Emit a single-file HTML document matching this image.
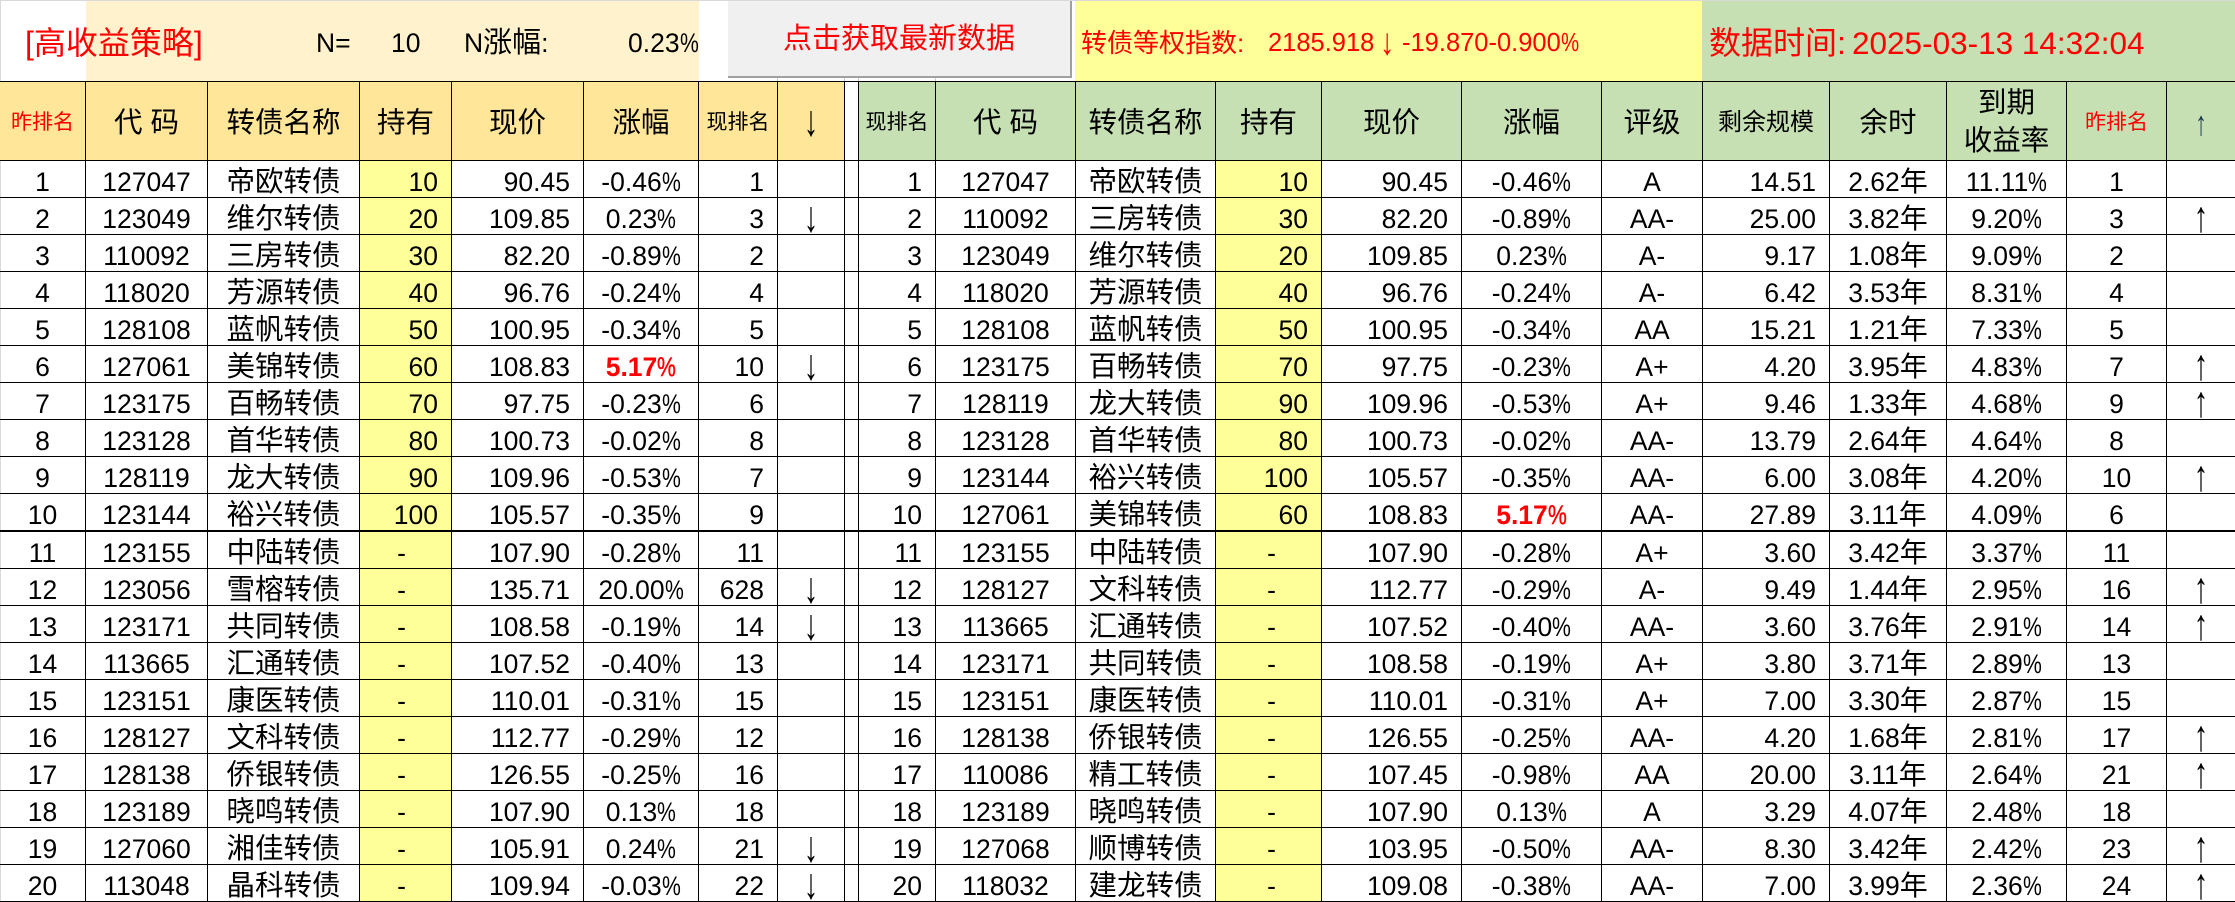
<!DOCTYPE html>
<html lang="zh">
<head>
<meta charset="utf-8">
<title>高收益策略</title>
<style>
*{box-sizing:border-box}
html,body{margin:0;padding:0;background:#fff;width:2235px;height:902px;overflow:hidden}
body{position:relative;font-family:"Liberation Sans","Noto Sans CJK SC",sans-serif;color:#000}
.a{position:absolute;white-space:nowrap}
.t{line-height:40px;height:40px}
table{position:absolute;left:0;top:81px;width:2235px;table-layout:fixed;border-collapse:separate;border-spacing:0}
td,th{border-right:1px solid #000;border-bottom:1px solid #000;padding:5px 0 0;height:37px;font-size:26.5px;line-height:30px;font-weight:normal;text-align:center;white-space:nowrap;overflow:hidden}
td:last-child,th:last-child{border-right:0}
tr.x td{height:38px;border-bottom-width:2px}
th{height:80px;border-top:1px solid #000;font-size:28.5px;padding:4px 0 0;line-height:38px}
th.two{padding:2px 0 0}
th.o{background:#ffe699}
th.g{background:#c6e0b4}
th.s{font-size:21px}
th.m{font-size:24px}
th.r{color:#f00}
th.w{background:#fff}
td:nth-child(3),td:nth-child(12){font-size:28.5px;padding-top:6px}
td:nth-child(4),td:nth-child(13){background:#ffff99;text-align:right;padding-right:13px}
td:nth-child(5),td:nth-child(7),td:nth-child(10),td:nth-child(14),td:nth-child(17){text-align:right;padding-right:13px}
td.d{text-align:center;padding-right:8px}
td:nth-child(13).d{padding-right:0;padding-left:6px}
i{font-style:normal;display:inline-block;width:19px;transform:scaleX(.8);transform-origin:0 50%;text-align:left;font-weight:normal}
i.h{-webkit-text-stroke:.5px #f00;color:#f00}
em{font-style:normal;font-size:28px}
b{color:#f00;font-weight:bold}
u{text-decoration:none;font-family:"Liberation Sans",sans-serif;font-size:29px;display:inline-block;line-height:30px;transform:translateY(-1px) scaleY(1.5)}
th u{font-size:29px}
th.ua u{font-size:23px;color:#1f3a4a}
</style>
</head>
<body>
<div class="a" style="left:0;top:0;width:2235px;height:1px;background:#d9d9d9"></div>
<div class="a" style="left:0;top:0;width:1px;height:902px;background:#d9d9d9"></div>
<div class="a" style="left:86px;top:1px;width:613px;height:80px;background:#fff2cc"></div>
<div class="a" style="left:1075px;top:1px;width:627px;height:80px;background:#ffff99"></div>
<div class="a" style="left:1702px;top:1px;width:533px;height:80px;background:#c6e0b4"></div>
<div class="a" style="left:728px;top:1px;width:344px;height:77px;background:#f0f0f0;border-right:2px solid #a0a0a0;border-bottom:2px solid #a0a0a0"></div>
<div class="a" style="left:777px;top:78px;width:1px;height:3px;background:#ccc"></div>
<div class="a" style="left:844px;top:78px;width:1px;height:3px;background:#ccc"></div>
<div class="a" style="left:858px;top:78px;width:1px;height:3px;background:#ccc"></div>
<div class="a" style="left:935px;top:78px;width:1px;height:3px;background:#ccc"></div>

<div class="a t" style="left:25px;top:23px;font-size:32px;color:#f00">[高收益策略]</div>
<div class="a t" style="left:316px;top:23px;font-size:26.5px">N=</div>
<div class="a t" style="left:391px;top:23px;font-size:26.5px">10</div>
<div class="a t" style="left:464px;top:23px;font-size:26.5px">N<em style="font-size:29px">涨幅</em>:</div>
<div class="a t" style="left:628px;top:23px;font-size:26.5px">0.23<i>%</i></div>
<div class="a t" style="left:783px;top:19px;font-size:29px;color:#f00">点击获取最新数据</div>
<div class="a t" style="left:1081px;top:23px;font-size:26px;color:#f00">转债等权指数:</div>
<div class="a t" style="left:1268px;top:23px;font-size:25.5px;color:#f00">2185.918</div>
<div class="a t" style="left:1380px;top:23px;font-size:29px;color:#f00;transform:scaleY(1.3)">↓</div>
<div class="a t" style="left:1402px;top:23px;font-size:25.5px;color:#f00">-19.870-0.900<i>%</i></div>
<div class="a t" style="left:1709px;top:23px;font-size:32px;color:#f00">数据时间:</div>
<div class="a t" style="left:1852px;top:23px;font-size:31.5px;color:#f00">2025-03-13 14:32:04</div>

<table>
<colgroup><col style="width:86px"><col style="width:122px"><col style="width:152px"><col style="width:92px"><col style="width:132px"><col style="width:115px"><col style="width:79px"><col style="width:67px"><col style="width:14px"><col style="width:77px"><col style="width:140px"><col style="width:140px"><col style="width:106px"><col style="width:140px"><col style="width:140px"><col style="width:101px"><col style="width:127px"><col style="width:117px"><col style="width:120px"><col style="width:100px"><col style="width:68px"></colgroup>
<tr>
<th class="o s r">昨排名</th><th class="o">代 码</th><th class="o">转债名称</th><th class="o">持有</th><th class="o">现价</th><th class="o">涨幅</th><th class="o s">现排名</th><th class="o"><u>↓</u></th><th class="w"></th>
<th class="g s">现排名</th><th class="g">代 码</th><th class="g">转债名称</th><th class="g">持有</th><th class="g">现价</th><th class="g">涨幅</th><th class="g">评级</th><th class="g m">剩余规模</th><th class="g">余时</th><th class="g two">到期<br>收益率</th><th class="g s r">昨排名</th><th class="g ua"><u>↑</u></th>
</tr>
<tr><td>1</td><td>127047</td><td>帝欧转债</td><td>10</td><td>90.45</td><td>-0.46<i>%</i></td><td>1</td><td></td><td></td><td>1</td><td>127047</td><td>帝欧转债</td><td>10</td><td>90.45</td><td>-0.46<i>%</i></td><td>A</td><td>14.51</td><td>2.62<em>年</em></td><td>11.11<i>%</i></td><td>1</td><td></td></tr>
<tr><td>2</td><td>123049</td><td>维尔转债</td><td>20</td><td>109.85</td><td>0.23<i>%</i></td><td>3</td><td><u>↓</u></td><td></td><td>2</td><td>110092</td><td>三房转债</td><td>30</td><td>82.20</td><td>-0.89<i>%</i></td><td>AA-</td><td>25.00</td><td>3.82<em>年</em></td><td>9.20<i>%</i></td><td>3</td><td><u>↑</u></td></tr>
<tr><td>3</td><td>110092</td><td>三房转债</td><td>30</td><td>82.20</td><td>-0.89<i>%</i></td><td>2</td><td></td><td></td><td>3</td><td>123049</td><td>维尔转债</td><td>20</td><td>109.85</td><td>0.23<i>%</i></td><td>A-</td><td>9.17</td><td>1.08<em>年</em></td><td>9.09<i>%</i></td><td>2</td><td></td></tr>
<tr><td>4</td><td>118020</td><td>芳源转债</td><td>40</td><td>96.76</td><td>-0.24<i>%</i></td><td>4</td><td></td><td></td><td>4</td><td>118020</td><td>芳源转债</td><td>40</td><td>96.76</td><td>-0.24<i>%</i></td><td>A-</td><td>6.42</td><td>3.53<em>年</em></td><td>8.31<i>%</i></td><td>4</td><td></td></tr>
<tr><td>5</td><td>128108</td><td>蓝帆转债</td><td>50</td><td>100.95</td><td>-0.34<i>%</i></td><td>5</td><td></td><td></td><td>5</td><td>128108</td><td>蓝帆转债</td><td>50</td><td>100.95</td><td>-0.34<i>%</i></td><td>AA</td><td>15.21</td><td>1.21<em>年</em></td><td>7.33<i>%</i></td><td>5</td><td></td></tr>
<tr><td>6</td><td>127061</td><td>美锦转债</td><td>60</td><td>108.83</td><td><b>5.17</b><i class="h">%</i></td><td>10</td><td><u>↓</u></td><td></td><td>6</td><td>123175</td><td>百畅转债</td><td>70</td><td>97.75</td><td>-0.23<i>%</i></td><td>A+</td><td>4.20</td><td>3.95<em>年</em></td><td>4.83<i>%</i></td><td>7</td><td><u>↑</u></td></tr>
<tr><td>7</td><td>123175</td><td>百畅转债</td><td>70</td><td>97.75</td><td>-0.23<i>%</i></td><td>6</td><td></td><td></td><td>7</td><td>128119</td><td>龙大转债</td><td>90</td><td>109.96</td><td>-0.53<i>%</i></td><td>A+</td><td>9.46</td><td>1.33<em>年</em></td><td>4.68<i>%</i></td><td>9</td><td><u>↑</u></td></tr>
<tr><td>8</td><td>123128</td><td>首华转债</td><td>80</td><td>100.73</td><td>-0.02<i>%</i></td><td>8</td><td></td><td></td><td>8</td><td>123128</td><td>首华转债</td><td>80</td><td>100.73</td><td>-0.02<i>%</i></td><td>AA-</td><td>13.79</td><td>2.64<em>年</em></td><td>4.64<i>%</i></td><td>8</td><td></td></tr>
<tr><td>9</td><td>128119</td><td>龙大转债</td><td>90</td><td>109.96</td><td>-0.53<i>%</i></td><td>7</td><td></td><td></td><td>9</td><td>123144</td><td>裕兴转债</td><td>100</td><td>105.57</td><td>-0.35<i>%</i></td><td>AA-</td><td>6.00</td><td>3.08<em>年</em></td><td>4.20<i>%</i></td><td>10</td><td><u>↑</u></td></tr>
<tr class="x"><td>10</td><td>123144</td><td>裕兴转债</td><td>100</td><td>105.57</td><td>-0.35<i>%</i></td><td>9</td><td></td><td></td><td>10</td><td>127061</td><td>美锦转债</td><td>60</td><td>108.83</td><td><b>5.17</b><i class="h">%</i></td><td>AA-</td><td>27.89</td><td>3.11<em>年</em></td><td>4.09<i>%</i></td><td>6</td><td></td></tr>
<tr><td>11</td><td>123155</td><td>中陆转债</td><td class="d">-</td><td>107.90</td><td>-0.28<i>%</i></td><td>11</td><td></td><td></td><td>11</td><td>123155</td><td>中陆转债</td><td class="d">-</td><td>107.90</td><td>-0.28<i>%</i></td><td>A+</td><td>3.60</td><td>3.42<em>年</em></td><td>3.37<i>%</i></td><td>11</td><td></td></tr>
<tr><td>12</td><td>123056</td><td>雪榕转债</td><td class="d">-</td><td>135.71</td><td>20.00<i>%</i></td><td>628</td><td><u>↓</u></td><td></td><td>12</td><td>128127</td><td>文科转债</td><td class="d">-</td><td>112.77</td><td>-0.29<i>%</i></td><td>A-</td><td>9.49</td><td>1.44<em>年</em></td><td>2.95<i>%</i></td><td>16</td><td><u>↑</u></td></tr>
<tr><td>13</td><td>123171</td><td>共同转债</td><td class="d">-</td><td>108.58</td><td>-0.19<i>%</i></td><td>14</td><td><u>↓</u></td><td></td><td>13</td><td>113665</td><td>汇通转债</td><td class="d">-</td><td>107.52</td><td>-0.40<i>%</i></td><td>AA-</td><td>3.60</td><td>3.76<em>年</em></td><td>2.91<i>%</i></td><td>14</td><td><u>↑</u></td></tr>
<tr><td>14</td><td>113665</td><td>汇通转债</td><td class="d">-</td><td>107.52</td><td>-0.40<i>%</i></td><td>13</td><td></td><td></td><td>14</td><td>123171</td><td>共同转债</td><td class="d">-</td><td>108.58</td><td>-0.19<i>%</i></td><td>A+</td><td>3.80</td><td>3.71<em>年</em></td><td>2.89<i>%</i></td><td>13</td><td></td></tr>
<tr><td>15</td><td>123151</td><td>康医转债</td><td class="d">-</td><td>110.01</td><td>-0.31<i>%</i></td><td>15</td><td></td><td></td><td>15</td><td>123151</td><td>康医转债</td><td class="d">-</td><td>110.01</td><td>-0.31<i>%</i></td><td>A+</td><td>7.00</td><td>3.30<em>年</em></td><td>2.87<i>%</i></td><td>15</td><td></td></tr>
<tr><td>16</td><td>128127</td><td>文科转债</td><td class="d">-</td><td>112.77</td><td>-0.29<i>%</i></td><td>12</td><td></td><td></td><td>16</td><td>128138</td><td>侨银转债</td><td class="d">-</td><td>126.55</td><td>-0.25<i>%</i></td><td>AA-</td><td>4.20</td><td>1.68<em>年</em></td><td>2.81<i>%</i></td><td>17</td><td><u>↑</u></td></tr>
<tr><td>17</td><td>128138</td><td>侨银转债</td><td class="d">-</td><td>126.55</td><td>-0.25<i>%</i></td><td>16</td><td></td><td></td><td>17</td><td>110086</td><td>精工转债</td><td class="d">-</td><td>107.45</td><td>-0.98<i>%</i></td><td>AA</td><td>20.00</td><td>3.11<em>年</em></td><td>2.64<i>%</i></td><td>21</td><td><u>↑</u></td></tr>
<tr><td>18</td><td>123189</td><td>晓鸣转债</td><td class="d">-</td><td>107.90</td><td>0.13<i>%</i></td><td>18</td><td></td><td></td><td>18</td><td>123189</td><td>晓鸣转债</td><td class="d">-</td><td>107.90</td><td>0.13<i>%</i></td><td>A</td><td>3.29</td><td>4.07<em>年</em></td><td>2.48<i>%</i></td><td>18</td><td></td></tr>
<tr><td>19</td><td>127060</td><td>湘佳转债</td><td class="d">-</td><td>105.91</td><td>0.24<i>%</i></td><td>21</td><td><u>↓</u></td><td></td><td>19</td><td>127068</td><td>顺博转债</td><td class="d">-</td><td>103.95</td><td>-0.50<i>%</i></td><td>AA-</td><td>8.30</td><td>3.42<em>年</em></td><td>2.42<i>%</i></td><td>23</td><td><u>↑</u></td></tr>
<tr><td>20</td><td>113048</td><td>晶科转债</td><td class="d">-</td><td>109.94</td><td>-0.03<i>%</i></td><td>22</td><td><u>↓</u></td><td></td><td>20</td><td>118032</td><td>建龙转债</td><td class="d">-</td><td>109.08</td><td>-0.38<i>%</i></td><td>AA-</td><td>7.00</td><td>3.99<em>年</em></td><td>2.36<i>%</i></td><td>24</td><td><u>↑</u></td></tr>
</table>
</body>
</html>
